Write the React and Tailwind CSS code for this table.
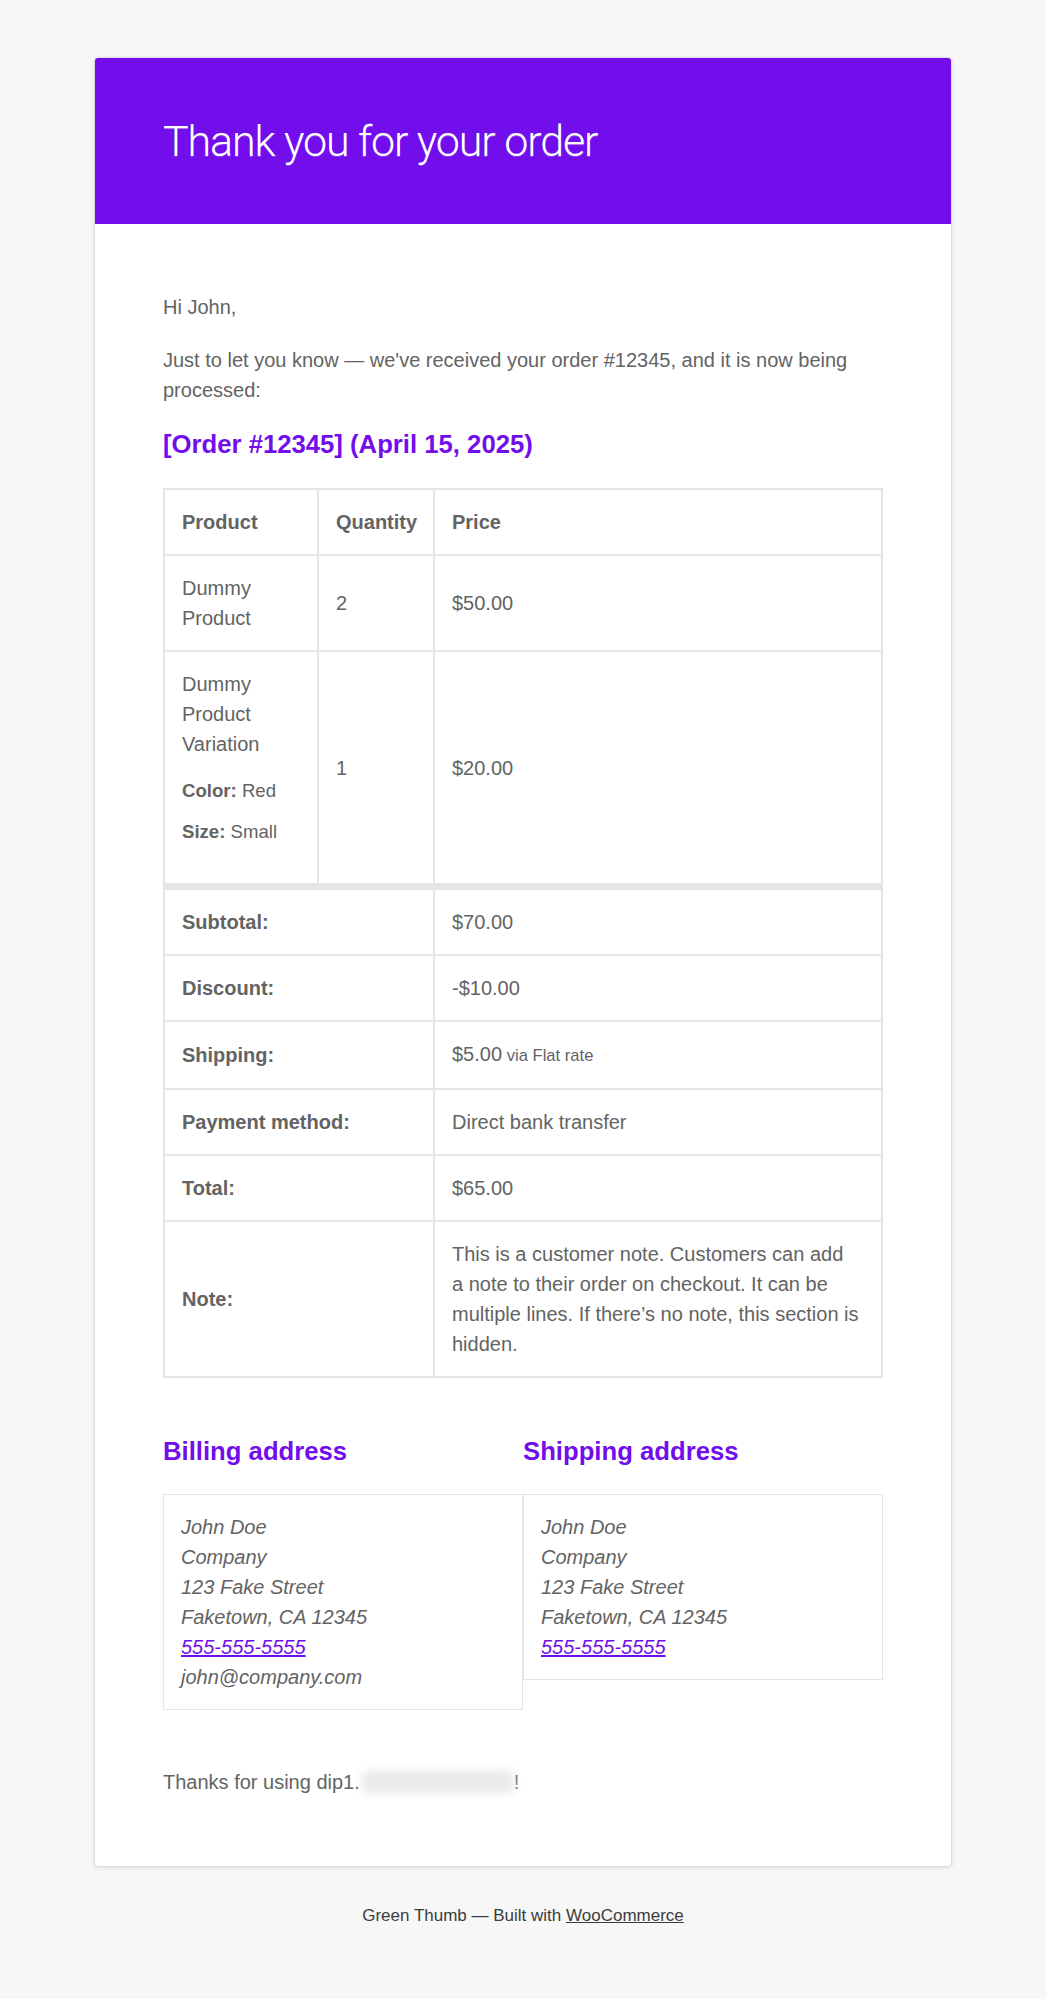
import React from "react";

const cell = "border border-[#e5e5e5] px-[17px] py-[17px] text-left align-middle";
const head = "border border-[#e5e5e5] px-[17px] py-[17px] text-left align-middle font-bold whitespace-nowrap";

const totals = [
  { label: "Subtotal:", value: "$70.00" },
  { label: "Discount:", value: "-$10.00" },
  { label: "Shipping:", value: "$5.00", via: "via Flat rate" },
  { label: "Payment method:", value: "Direct bank transfer" },
  { label: "Total:", value: "$65.00" },
];

function Address({ title, lines, email }) {
  return (
    <div>
      <h2 className="mb-[26px] text-[25.7px] font-bold leading-[33px] text-[#720eec]">{title}</h2>
      <address className="border border-[#e5e5e5] p-[17px] italic">
        {lines.map((line) => (
          <div key={line}>{line}</div>
        ))}
        <div>
          <a href="#" className="text-[#720eec] underline">555-555-5555</a>
        </div>
        {email && <div>{email}</div>}
      </address>
    </div>
  );
}

export default function App() {
  const addressLines = ["John Doe", "Company", "123 Fake Street", "Faketown, CA 12345"];

  return (
    <div className="min-h-screen bg-[#f7f7f7] pt-[57px] pb-[60px] font-['Liberation_Sans',Arial,sans-serif] text-[#636363]">
      <div className="mx-auto w-[858px] overflow-hidden rounded-[4px] border border-[#dedede] bg-white shadow-[0_1px_4px_rgba(0,0,0,0.1)]">
        <div className="bg-[#720eec] px-[68px] py-[51px]">
          <h1 className="font-['Roboto',sans-serif] text-[43px] font-light leading-[64px] tracking-[-1.1px] text-white [text-shadow:0_1px_0_#8e3ef0]">
            Thank you for your order
          </h1>
        </div>

        <div className="px-[68px] pt-[68px] pb-[46px] text-[20px] leading-[30px]">
          <p className="mb-[23px]">Hi John,</p>
          <p className="mb-[23px]">
            Just to let you know — we've received your order #12345, and it is now being processed:
          </p>

          <h2 className="mb-[27px] text-[25.7px] font-bold leading-[33px] text-[#720eec]">
            [Order #12345] (April 15, 2025)
          </h2>

          <table className="w-full table-fixed border-separate border-spacing-0 border border-[#e5e5e5]">
            <thead>
              <tr>
                <th className={head + " w-[154px]"}>Product</th>
                <th className={head + " w-[116px]"}>Quantity</th>
                <th className={head}>Price</th>
              </tr>
            </thead>
            <tbody>
              <tr>
                <td className={cell}>Dummy Product</td>
                <td className={cell}>2</td>
                <td className={cell}>$50.00</td>
              </tr>
              <tr>
                <td className={cell}>
                  Dummy Product Variation
                  <ul className="pt-[18px] pb-[20px] text-[18.6px] leading-[28px]">
                    <li>
                      <strong>Color:</strong> Red
                    </li>
                    <li className="mt-[13px]">
                      <strong>Size:</strong> Small
                    </li>
                  </ul>
                </td>
                <td className={cell}>1</td>
                <td className={cell}>$20.00</td>
              </tr>
            </tbody>
            <tfoot>
              {totals.map((row, i) => (
                <tr key={row.label}>
                  <th colSpan={2} className={head + (i === 0 ? " border-t-[6px]" : "")}>
                    {row.label}
                  </th>
                  <td className={cell + (i === 0 ? " border-t-[6px]" : "")}>
                    {row.value}
                    {row.via && <small className="text-[16.6px]">&nbsp;{row.via}</small>}
                  </td>
                </tr>
              ))}
              <tr>
                <th colSpan={2} className={head}>Note:</th>
                <td className={cell}>
                  This is a customer note. Customers can add
                  <br />
                  a note to their order on checkout. It can be
                  <br />
                  multiple lines. If there’s no note, this section is
                  <br />
                  hidden.
                </td>
              </tr>
            </tfoot>
          </table>

          <div className="mt-[57px] mb-[57px] grid grid-cols-2 items-start">
            <Address title="Billing address" lines={addressLines} email="john@company.com" />
            <Address title="Shipping address" lines={addressLines} />
          </div>

          <p className="mb-[23px]">
            Thanks for using dip1.
            <span className="ml-[2px] inline-block h-[22px] w-[152px] rounded-md bg-[#e9e9e9] align-[-4px] blur-[4px]" />
            !
          </p>
        </div>
      </div>

      <p className="mt-[36px] text-center text-[17px] leading-[25px] text-[#3c3c3c]">
        Green Thumb — Built with{" "}
        <a href="#" className="underline">
          WooCommerce
        </a>
      </p>
    </div>
  );
}
